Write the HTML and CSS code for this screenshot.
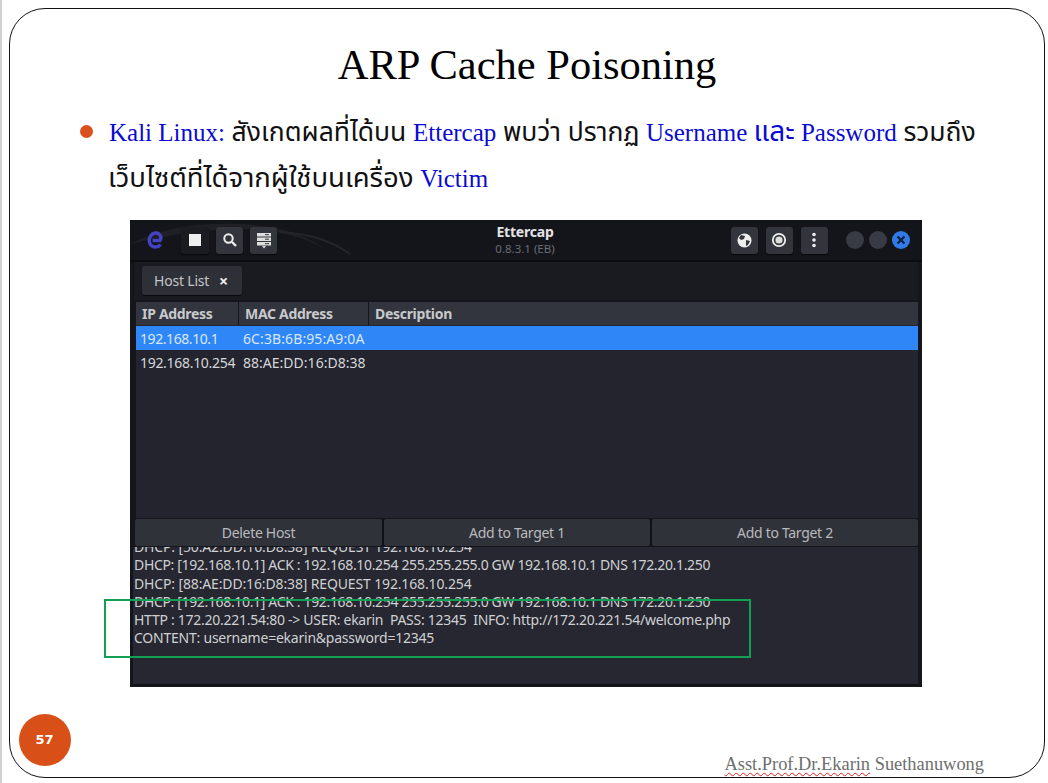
FILE: index.html
```html
<!DOCTYPE html>
<html lang="th">
<head>
<meta charset="utf-8">
<title>ARP Cache Poisoning</title>
<link rel="stylesheet" href="styles.css">
</head>
<body>
<main class="slide">
  <h1 class="title">ARP Cache Poisoning</h1>
  <div class="bullet-row">
    <span class="dot"></span>
    <p class="bullet-text"><span class="en">Kali Linux:</span> สังเกตผลที่ได้บน <span class="en">Ettercap</span> พบว่า ปรากฏ <span class="en">Username <span class="and">และ</span> Password</span> รวมถึง<br><span class="thai-lg">เว็บไซต์ที่ได้จากผู้ใช้บนเครื่อง</span> <span class="en">Victim</span></p>
  </div>
  <section class="window">
    <header class="titlebar">
      <svg class="swoosh" width="300" height="40" viewBox="0 0 300 40"><path d="M0 24C30 8 70 2 110 4s70 12 85 26c-20-14-50-20-80-21S40 14 0 24z" fill="#1f2026"/><path d="M150 12c30 2 50 8 70 22" fill="none" stroke="#24252b" stroke-width="2"/></svg>
      <div class="tb-left">
        <svg class="logo" width="18" height="20" viewBox="0 0 18 20"><path d="M14.500 14.500c-2 2.800-6.500 3.200-9 1.200S2.500 9.500 4.500 6s7-4 9-1.500 1.500 4.500.5 6H6.500" fill="none" stroke="#4343c4" stroke-width="3.400"/></svg>
        <span class="tool tool-dark"><span class="stop"></span></span>
        <span class="tool"><svg width="16" height="16" viewBox="0 0 16 16"><circle cx="6.500" cy="6.500" r="4.200" fill="none" stroke="#eee" stroke-width="2"/><path d="M10 10l4 4" stroke="#eee" stroke-width="2.400"/></svg></span>
        <span class="tool"><svg width="16" height="17" viewBox="0 0 16 17"><path d="M1 1h14v3.500H1zM1 5.500h14V9H1zM1 10h14v3.500H1z" fill="#ddd"/><path d="M9 2.700h4M9 7.200h4M9 11.700h4" stroke="#333" stroke-width="1"/><path d="M6 14h4l-2 2.500z" fill="#ddd"/></svg></span>
      </div>
      <div class="tb-center">
        <span class="app">Ettercap</span>
        <span class="ver">0.8.3.1 (EB)</span>
      </div>
      <div class="tb-right">
        <span class="tool"><svg width="15" height="15" viewBox="0 0 15 15"><circle cx="7.500" cy="7.500" r="7" fill="#eee"/><path d="M4 2l4 1-1 3-3 1-2-2zM9 7l4 1-2 4-2 1z" fill="#33353d"/></svg></span>
        <span class="tool"><svg width="16" height="16" viewBox="0 0 16 16"><circle cx="8" cy="8" r="6.200" fill="none" stroke="#eee" stroke-width="1.800"/><circle cx="8" cy="8" r="3.600" fill="#ddd"/></svg></span>
        <span class="tool"><svg width="6" height="16" viewBox="0 0 6 16"><circle cx="3" cy="2.500" r="1.800" fill="#eee"/><circle cx="3" cy="8" r="1.800" fill="#eee"/><circle cx="3" cy="13.500" r="1.800" fill="#eee"/></svg></span>
        <span class="winbtns">
          <span class="wb"></span>
          <span class="wb"></span>
          <span class="wb wb-close"><svg width="10" height="10" viewBox="0 0 10 10"><path d="M1.500 1.500l7 7M8.500 1.500l-7 7" stroke="#10203a" stroke-width="2.200"/></svg></span>
        </span>
      </div>
    </header>
    <div class="tabbar"><span class="tab">Host List <b class="tab-x">×</b></span></div>
    <div class="table">
      <div class="thead"><span class="c1">IP Address</span><span class="c2">MAC Address</span><span class="c3">Description</span></div>
      <div class="row selected"><span class="c1">192.168.10.1</span><span class="c2">6C:3B:6B:95:A9:0A</span></div>
      <div class="row"><span class="c1">192.168.10.254</span><span class="c2">88:AE:DD:16:D8:38</span></div>
    </div>
    <div class="actions">
      <span class="btn btn-a">Delete Host</span>
      <span class="btn btn-b">Add to Target 1</span>
      <span class="btn btn-c">Add to Target 2</span>
    </div>
    <div class="log">
      <p class="clipped">DHCP: [50:A2:DD:16:D8:38] REQUEST 192.168.10.254</p>
      <p class="ack">DHCP: [192.168.10.1] ACK : 192.168.10.254 255.255.255.0 GW 192.168.10.1 DNS 172.20.1.250</p>
      <p class="req">DHCP: [88:AE:DD:16:D8:38] REQUEST 192.168.10.254</p>
      <p class="ack">DHCP: [192.168.10.1] ACK : 192.168.10.254 255.255.255.0 GW 192.168.10.1 DNS 172.20.1.250</p>
      <p class="http">HTTP : 172.20.221.54:80 -&gt; USER: ekarin&nbsp; PASS: 12345&nbsp; INFO: http://172.20.221.54/welcome.php</p>
      <p class="content">CONTENT: username=ekarin&amp;password=12345</p>
    </div>
    <div class="highlight"></div>
  </section>
  <footer class="foot">
    <span class="badge">57</span>
    <span class="author"><span class="wavy">Asst.Prof.Dr.Ekarin</span> Suethanuwong</span>
  </footer>
</main>
</body>
</html>
```
FILE: styles.css
```css
* { box-sizing: border-box; }
html, body { margin: 0; padding: 0; }
body {
  width: 1048px;
  height: 783px;
  background: #fff;
  overflow: hidden;
  border-left: 2px solid #d0d0d0;
  padding: 8px 3px 5px 7px;
  font-family: "Liberation Serif", "Noto Sans Thai", "Noto Serif Thai", "Noto Sans", serif;
}
.slide {
  height: 770px;
  border: 1.5px solid #111;
  border-radius: 36px;
  display: flex;
  flex-direction: column;
  position: relative;
}
.title {
  margin: 30px 0 0;
  font-size: 42.500px;
  font-weight: 400;
  line-height: 52px;
  text-align: center;
  color: #000;
}
.bullet-row {
  display: flex;
  margin: 18px 0 0 70px;
  align-items: flex-start;
}
.dot {
  width: 13px;
  height: 13px;
  border-radius: 50%;
  background: #d9501e;
  margin: 16px 16px 0 0;
  flex: none;
}
.bullet-text {
  margin: 0;
  font-size: 26.500px;
  line-height: 45px;
  color: #111;
  white-space: nowrap;
}
.en { color: #0a0ad2; font-size: 25px; }
.and { font-size: 28px; }
.thai-lg { font-size: 27.500px; margin-left: -1px; }
.window {
  position: relative;
  width: 792px;
  height: 467px;
  margin: 19px 0 0 120px;
  background: #15161c;
  padding: 0 4px 2px 5px;
  font-family: "Noto Sans", "Open Sans", sans-serif;
  display: flex;
  flex-direction: column;
  color: #d6d7da;
  font-size: 14px;
}
.titlebar {
  height: 42px;
  margin: 0 -4px 0 -5px;
  padding: 0 12px 0 16px;
  flex: none;
  display: flex;
  align-items: center;
  justify-content: space-between;
  background: #14151b;
  border-bottom: 2px solid #0c0d11;
  position: relative;
}
.swoosh { position: absolute; left: 0; top: 0; }
.tb-left { display: flex; align-items: center; gap: 7px; width: 303px; position: relative; }
.tb-right { display: flex; align-items: center; gap: 8px; width: 309px; justify-content: flex-end; position: relative; }
.logo { margin-right: 10px; }
.tool {
  width: 27px;
  height: 27px;
  background: #33353d;
  border-radius: 3px;
  display: flex;
  align-items: center;
  justify-content: center;
  box-shadow: 0 1px 1px #08090c;
}
.tool-dark { background: #1b1c22; width: 28px; }
.stop { width: 12px; height: 12px; background: #eee; }
.tb-center { display: flex; flex-direction: column; align-items: center; line-height: 17px; position: relative; }
.app { font-weight: 700; font-size: 14px; color: #e4e4e6; letter-spacing: -.2px; }
.ver { font-size: 11.500px; color: #6a6c72; }
.winbtns { display: flex; align-items: center; gap: 5px; margin-left: 10px; }
.wb { width: 18px; height: 18px; border-radius: 50%; background: #383b43; display: flex; align-items: center; justify-content: center; }
.wb-close { background: #2f7be8; }
.tabbar { height: 38px; flex: none; padding: 4px 0 0 7px; background: #1a1b21; }
.tab {
  display: inline-flex;
  align-items: center;
  justify-content: space-between;
  width: 100px;
  height: 29px;
  padding: 0 14px 0 12px;
  background: #2e3037;
  border-radius: 3px;
  color: #c3c5c9;
  box-shadow: 0 1px 1px #0a0b0e;
  letter-spacing: -.2px;
}
.tab-x { color: #eee; font-size: 16px; }
.table { flex: none; height: 216px; margin: 2px 0 0 1px; background: #23242d; }
.thead {
  display: flex;
  height: 23px;
  margin-bottom: 1px;
  background: #33353e;
  align-items: center;
  font-weight: 700;
  color: #c8c9cc;
  letter-spacing: -.3px;
}
.c1 { width: 103px; padding-left: 6px; flex: none; white-space: nowrap; }
.c2 { width: 130px; padding-left: 6px; flex: none; white-space: nowrap; }
.c3 { padding-left: 6px; }
.thead .c1, .thead .c2 { border-right: 1px solid #15161c; height: 23px; line-height: 23px; }
.row { display: flex; height: 24px; align-items: center; }
.row .c1 { padding-left: 4px; letter-spacing: -.3px; }
.row .c2 { padding-left: 4px; letter-spacing: .02px; }
.selected .c1 { letter-spacing: -.42px; }
.selected .c2 { letter-spacing: .1px; }
.selected { background: #2f86f6; color: #d8e8fb; }
.actions {
  flex: none;
  display: flex;
  gap: 2px;
  height: 27px;
  margin-top: 1px;
  background: #111217;
}
.btn {
  background: #30323a;
  color: #b9babe;
  border-radius: 2px;
  display: flex;
  align-items: center;
  justify-content: center;
  letter-spacing: -.3px;
}
.btn-a { width: 247px; }
.btn-b { width: 266px; }
.btn-c { flex: 1; }
.log {
  flex: 1;
  overflow: hidden;
  margin: 1px 0 0 -2px;
  padding-left: 1px;
  background: #262730;
  border-bottom: 1px solid #0e0f13;
  color: #cfd0d3;
}
.log p { margin: 0; height: 18.300px; line-height: 18.300px; white-space: nowrap; }
.log .clipped { margin-top: -9px; letter-spacing: -.14px; }
.log .ack { letter-spacing: -.34px; }
.log .req { letter-spacing: -.14px; }
.log .http { letter-spacing: -.27px; }
.log .content { letter-spacing: -.23px; }
.highlight {
  position: absolute;
  left: -26px;
  top: 379px;
  width: 647px;
  height: 59px;
  border: 2px solid #12a152;
}
.foot {
  flex: 1;
  display: flex;
  align-items: flex-end;
  justify-content: space-between;
  padding: 0 60px 3px 8.500px;
}
.badge {
  width: 52px;
  height: 52px;
  border-radius: 50%;
  background: #d84f17;
  color: #fff;
  font: 700 13px/52px "DejaVu Sans", sans-serif;
  text-align: center;
  margin-bottom: 8px;
}
.author {
  font-size: 18.400px;
  line-height: 20px;
  color: #6e6e6e;
}
.wavy { text-decoration: underline wavy #e02020; text-decoration-thickness: 1px; text-underline-offset: 2px; }
```
